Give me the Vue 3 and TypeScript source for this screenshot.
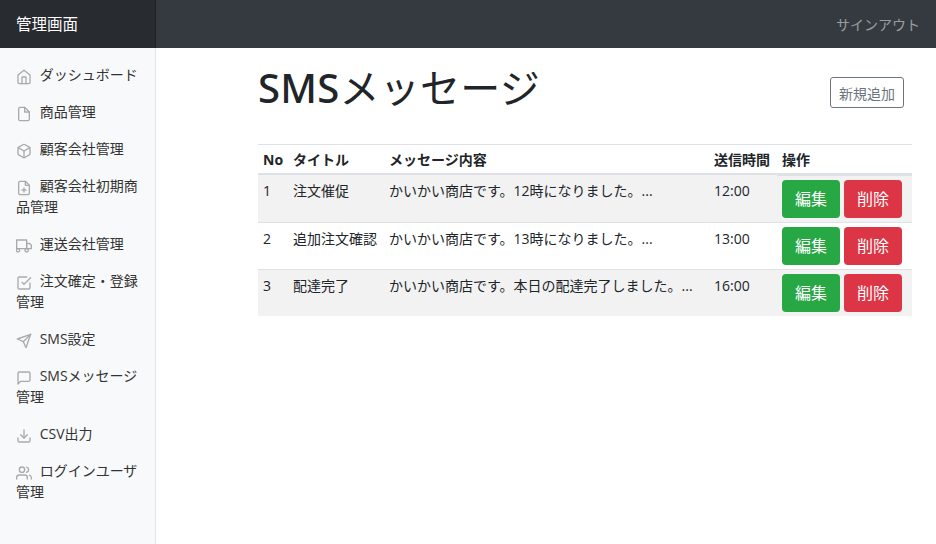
<script setup lang="ts">
interface NavItem { label: string; icon: string[] }
const nav: NavItem[] = [
  { label: 'ダッシュボード', icon: ['M3 9l9-7 9 7v11a2 2 0 0 1-2 2H5a2 2 0 0 1-2-2z', 'M9 22V12h6v10'] },
  { label: '商品管理', icon: ['M13 2H6a2 2 0 0 0-2 2v16a2 2 0 0 0 2 2h12a2 2 0 0 0 2-2V9z', 'M13 2v7h7'] },
  { label: '顧客会社管理', icon: ['M21 16V8a2 2 0 0 0-1-1.73l-7-4a2 2 0 0 0-2 0l-7 4A2 2 0 0 0 3 8v8a2 2 0 0 0 1 1.73l7 4a2 2 0 0 0 2 0l7-4A2 2 0 0 0 21 16z', 'M3.27 6.96L12 12.01l8.73-5.05', 'M12 22.08V12'] },
  { label: '顧客会社初期商品管理', icon: ['M14 2H6a2 2 0 0 0-2 2v16a2 2 0 0 0 2 2h12a2 2 0 0 0 2-2V8z', 'M14 2v6h6', 'M12 18v-6', 'M9 15h6'] },
  { label: '運送会社管理', icon: ['M1 3h15v13H1z', 'M16 8h4l3 3v5h-7z', 'M5.5 18.5a2.5 2.5 0 1 0 0 .01', 'M18.5 18.5a2.5 2.5 0 1 0 0 .01'] },
  { label: '注文確定・登録管理', icon: ['M9 11l3 3L22 4', 'M21 12v7a2 2 0 0 1-2 2H5a2 2 0 0 1-2-2V5a2 2 0 0 1 2-2h11'] },
  { label: 'SMS設定', icon: ['M22 2L11 13', 'M22 2l-7 20-4-9-9-4z'] },
  { label: 'SMSメッセージ管理', icon: ['M21 15a2 2 0 0 1-2 2H7l-4 4V5a2 2 0 0 1 2-2h14a2 2 0 0 1 2 2z'] },
  { label: 'CSV出力', icon: ['M21 15v4a2 2 0 0 1-2 2H5a2 2 0 0 1-2-2v-4', 'M7 10l5 5 5-5', 'M12 15V3'] },
  { label: 'ログインユーザ管理', icon: ['M17 21v-2a4 4 0 0 0-4-4H5a4 4 0 0 0-4 4v2', 'M9 3a4 4 0 1 0 0 8 4 4 0 0 0 0-8z', 'M23 21v-2a4 4 0 0 0-3-3.87', 'M16 3.13a4 4 0 0 1 0 7.75'] },
]
const rows = [
  { no: 1, title: '注文催促', body: 'かいかい商店です。12時になりました。...', time: '12:00' },
  { no: 2, title: '追加注文確認', body: 'かいかい商店です。13時になりました。...', time: '13:00' },
  { no: 3, title: '配達完了', body: 'かいかい商店です。本日の配達完了しました。...', time: '16:00' },
]
</script>

<template>
  <div class="page">
    <header class="topbar">
      <a class="brand">管理画面</a>
      <a class="signout">サインアウト</a>
    </header>
    <div class="body">
      <nav class="sidebar">
        <a v-for="item in nav" :key="item.label" class="link">
          <svg class="icon" viewBox="0 0 24 24" width="16" height="16" fill="none" stroke="currentColor" stroke-width="2" stroke-linecap="round" stroke-linejoin="round">
            <path v-for="d in item.icon" :key="d" :d="d" />
          </svg>
          {{ item.label }}
        </a>
      </nav>
      <main class="main">
        <div class="heading">
          <h1><span class="sms">SMS</span>メッセージ</h1>
          <button class="add">新規追加</button>
        </div>
        <table class="table">
          <thead>
            <tr><th class="c-no">No</th><th class="c-title">タイトル</th><th class="c-body">メッセージ内容</th><th class="c-time">送信時間</th><th>操作</th></tr>
          </thead>
          <tbody>
            <tr v-for="r in rows" :key="r.no">
              <td>{{ r.no }}</td>
              <td>{{ r.title }}</td>
              <td>{{ r.body }}</td>
              <td>{{ r.time }}</td>
              <td class="ops"><button class="btn green">編集</button><button class="btn red">削除</button></td>
            </tr>
          </tbody>
        </table>
      </main>
    </div>
  </div>
</template>

<style>
html, body { margin: 0; background: #fff; }
</style>
<style scoped>
.page {
  width: 936px;
  height: 544px;
  overflow: hidden;
  font-family: "Open Sans", "Noto Sans CJK JP", sans-serif;
  color: #212529;
  font-size: 14px;
  display: flex;
  flex-direction: column;
}
.topbar {
  height: 48px;
  flex: none;
  background: #343a40;
  display: flex;
  align-items: center;
  justify-content: space-between;
}
.brand {
  width: 156px;
  box-sizing: border-box;
  height: 48px;
  line-height: 48px;
  padding-left: 16px;
  background: #282b2f;
  color: #fff;
  font-size: 15.5px;
  box-shadow: inset -1px 0 0 rgba(0,0,0,.25);
}
.signout { color: rgba(255,255,255,.5); font-size: 14px; padding-right: 16px; }
.body { flex: 1; display: flex; min-height: 0; }
.sidebar {
  width: 156px;
  box-sizing: border-box;
  flex: none;
  background: #f8f9fa;
  border-right: 1px solid #e4e5e6;
  padding-top: 8px;
}
.link {
  display: block;
  padding: 8px 16px;
  color: #333;
  font-size: 14px;
  line-height: 21px;
}
.icon { color: #aaa; vertical-align: -5px; margin-right: 4px; }
.main { flex: 1; padding: 0 24px 0 102px; min-width: 0; }
.heading {
  display: flex;
  justify-content: space-between;
  align-items: center;
  height: 72px;
  margin-top: 8px;
  margin-bottom: 16px;
  padding-right: 8px;
}
h1 { margin: 0; font-size: 40px; font-weight: 400; line-height: 48px; letter-spacing: .25px; position: relative; top: -4px; }
.sms { font-family: "Noto Sans", sans-serif; font-weight: 500; }
.add {
  font: inherit;
  height: 31px;
  width: 74px;
  padding: 0;
  background: #fff;
  border: 1px solid #6c757d;
  border-radius: 3px;
  color: #6c757d;
  margin-top: 1px;
}
.table { width: 654px; border-collapse: collapse; table-layout: fixed; }
th {
  text-align: left;
  padding: 5px 5px 3px;
  height: 20px;
  border-top: 1px solid #dee2e6;
  border-bottom: 2px solid #dee2e6;
  font-size: 14px;
  line-height: 20px;
}
td {
  padding: 6px 5px 2px;
  vertical-align: top;
  border-top: 1px solid #dee2e6;
  font-size: 14px;
  line-height: 20px;
  white-space: nowrap;
  overflow: hidden;
  height: 38px;
}
td.ops { padding: 4px 5px; }
tbody tr:nth-child(odd) td { background: #f2f2f2; }
.c-no { width: 20px; }
.c-title { width: 86px; }
.c-body { width: 315px; }
.c-time { width: 58px; }
.ops { display: flex; gap: 4px; overflow: visible; }
.btn {
  font: inherit;
  font-size: 16px;
  width: 58px;
  height: 38px;
  padding: 0;
  color: #fff;
  border: 1px solid transparent;
  border-radius: 4px;
}
.green { background: #28a745; }
.red { background: #dc3545; }
</style>
